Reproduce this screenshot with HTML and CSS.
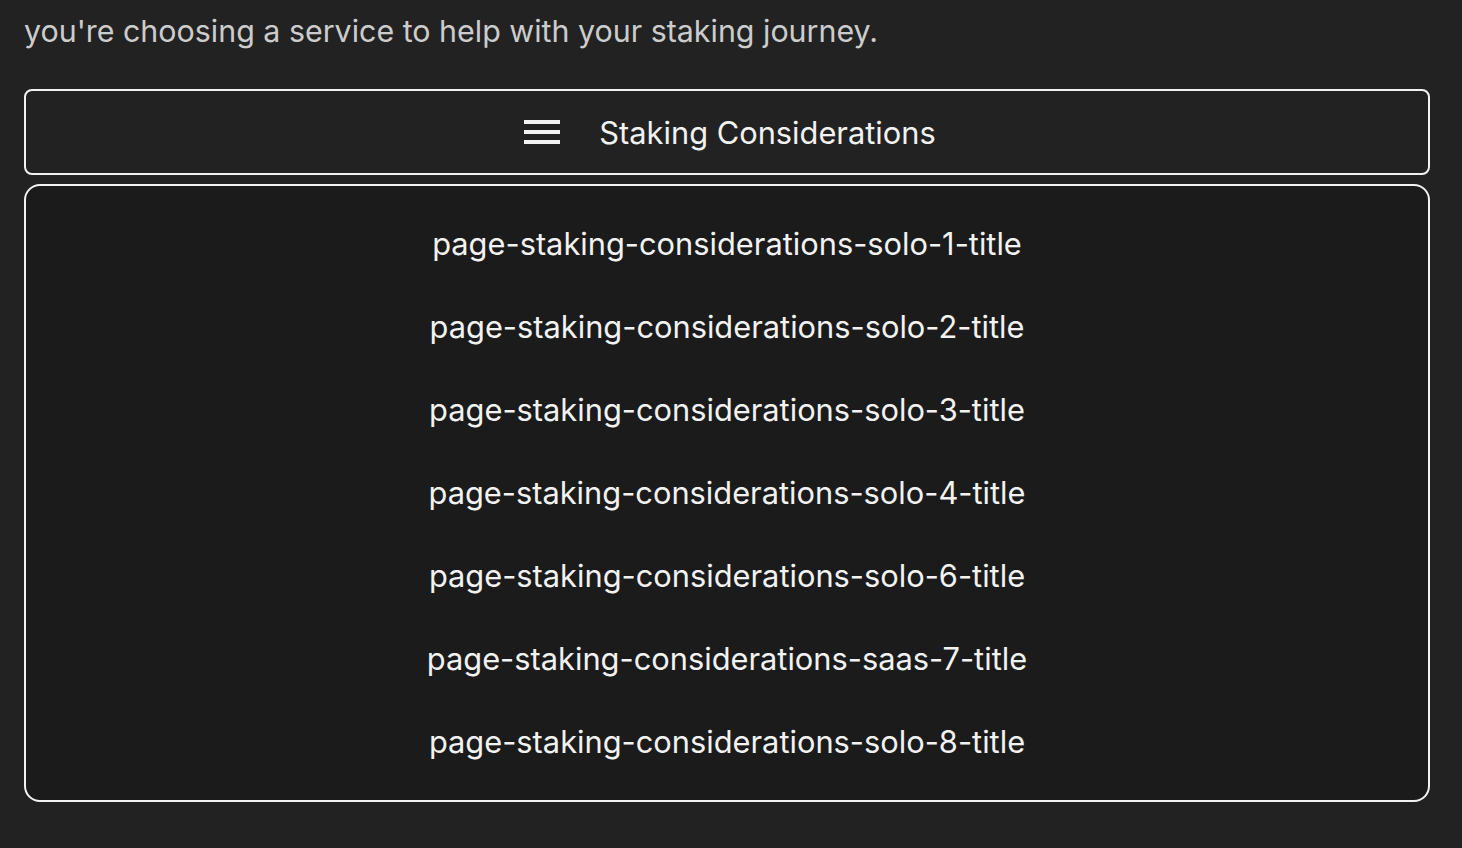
FILE: index.html
```html
<!DOCTYPE html>
<html lang="en">
<head>
  <meta charset="UTF-8" />
  <meta name="viewport" content="width=device-width, initial-scale=1.0"/>
  <title>Staking Considerations</title>
  <link rel="stylesheet" href="styles.css">
</head>
<body>
  <div class="container">
    <p class="intro">you're choosing a service to help with your staking journey.</p>

    <button class="menu-toggle">
      <span class="burger">
        <span></span>
        <span></span>
        <span></span>
      </span>
      <span class="menu-title">Staking Considerations</span>
    </button>

    <ul class="menu-list">
      <li>page-staking-considerations-solo-1-title</li>
      <li>page-staking-considerations-solo-2-title</li>
      <li>page-staking-considerations-solo-3-title</li>
      <li>page-staking-considerations-solo-4-title</li>
      <li>page-staking-considerations-solo-6-title</li>
      <li>page-staking-considerations-saas-7-title</li>
      <li>page-staking-considerations-solo-8-title</li>
    </ul>
  </div>
</body>
</html>
```

FILE: styles.css
```css
:root {
  --background-color: #222222;
  --panel-color: #1b1b1b;
  --border-color: #f2f2f2;
  --text-color: #f2f2f2;
  --muted-color: #cccccc;
}

body {
  margin: 0;
  padding: 0;
  background: var(--background-color);
  font-family: 'Inter', 'Noto Sans', sans-serif;
  color: var(--text-color);
}

.container {
  padding: 0 32px 0 24px;
}

.intro {
  margin: 0;
  padding-top: 11px;
  font-size: 30.4px;
  line-height: 40px;
  color: var(--muted-color);
}

/* bouton du menu */
.menu-toggle {
  margin-top: 38px;
  width: 100%;
  height: 86px;
  padding: 0 0 0 6px;
  display: flex;
  justify-content: center;
  align-items: center;
  gap: 39px;
  background: transparent;
  border: 2px solid var(--border-color);
  border-radius: 8px;
  color: var(--text-color);
  font-family: inherit;
  font-size: 30.8px;
  cursor: pointer;
}

.burger {
  display: flex;
  flex-direction: column;
  gap: 6px;
  width: 36px;
}

.burger span {
  display: block;
  height: 4px;
  background: var(--text-color);
}

.menu-list {
  list-style: none;
  margin: 9px 0 0;
  padding: 16px 0 17px;
  background: var(--panel-color);
  border: 2px solid var(--border-color);
  border-radius: 16px;
}

.menu-list li {
  height: 83px;
  display: flex;
  justify-content: center;
  align-items: center;
  font-size: 30.8px;
}
```
